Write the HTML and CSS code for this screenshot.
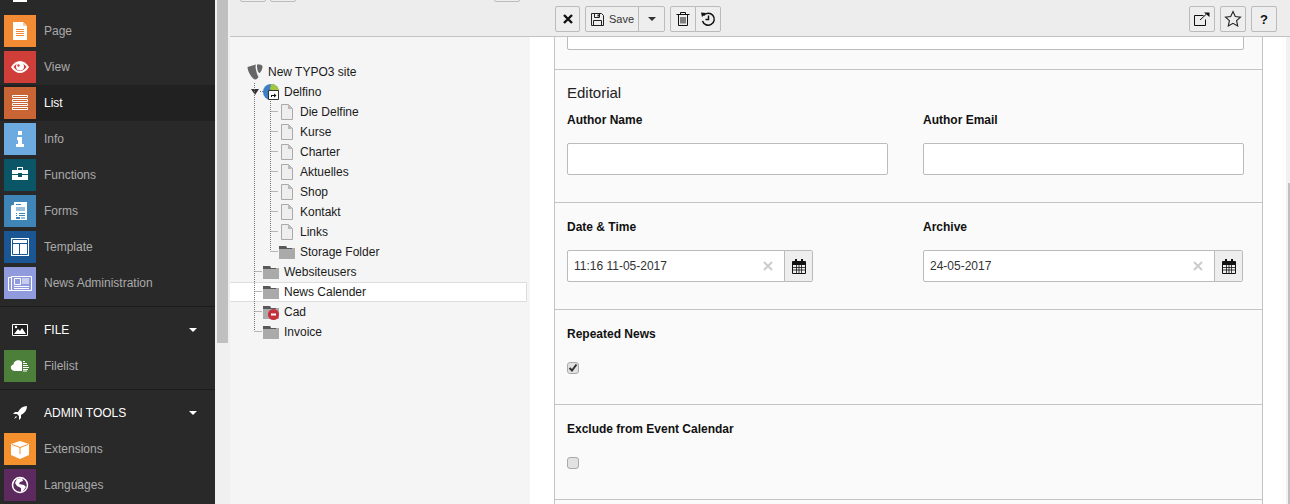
FILE: index.html
```html
<!DOCTYPE html>
<html lang="en">
<head>
  <meta charset="UTF-8">
  <title>TYPO3 Backend</title>
  <link rel="stylesheet" href="styles.css">
</head>
<body>

  <nav class="sidebar">
    <div class="menu">
      <div class="group">
        <div class="group-head">
          <span class="head-icon"><svg width="16" height="16" viewBox="0 0 16 16"><rect x="2" y="1" width="12" height="13" fill="none" stroke="#fff" stroke-width="2"/></svg></span>
        </div>
        <a class="item"><span class="tile t-page"><svg width="32" height="32" viewBox="0 0 32 32"><path d="M9 7h10l4 4v14H9z" fill="#fff"/><path d="M19 7l4 4h-4z" fill="#f7c9a0"/><path d="M12 14.500h8M12 16.500h8M12 18.500h8M12 20.500h8" stroke="#f38b34"/></svg></span>Page</a>
        <a class="item"><span class="tile t-view"><svg width="32" height="32" viewBox="0 0 32 32"><path d="M7 16c5-8 13-8 18 0-5 8-13 8-18 0z" fill="#fff"/><path d="M9.500 16c2-2.800 4-4 6.500-4s4.500 1.200 6.500 4c-2 2.800-4 4-6.500 4s-4.500-1.200-6.500-4z" fill="#d03e3a"/><circle cx="16" cy="15.500" r="4" fill="#fff"/><circle cx="14.500" cy="14.500" r="1.200" fill="#d03e3a"/></svg></span>View</a>
        <a class="item active"><span class="tile t-list"><svg width="32" height="32" viewBox="0 0 32 32"><path d="M8.500 8.500h15v2h-15zM8.500 12.500h15v2h-15zM8.500 16.500h15v2h-15zM8.500 20.500h15v2h-15z" fill="none" stroke="#fff"/></svg></span>List</a>
        <a class="item"><span class="tile t-info"><svg width="32" height="32" viewBox="0 0 32 32"><path d="M14 8h4v4h-4zM13 14h5v7h2v3h-8v-3h2v-4h-1z" fill="#fff"/></svg></span>Info</a>
        <a class="item"><span class="tile t-func"><svg width="32" height="32" viewBox="0 0 32 32"><path d="M13 11V8h6v3h5v4h-6v-1h-4v1H8v-4zM14 9v2h4V9zM8 16h6v2h4v-2h6v5H8z" fill="#fff" fill-rule="evenodd"/></svg></span>Functions</a>
        <a class="item"><span class="tile t-forms"><svg width="32" height="32" viewBox="0 0 32 32"><path d="M8 10h2v15H7V11zM10 7h13v18H10z" fill="#fff"/><path d="M12 12h9v4h-9z" fill="#9cc0dc"/><path d="M12 9.500h5M12 18.500h1M15 18.500h6M12 20.500h1M15 20.500h6" stroke="#3f85b8"/><path d="M12 22h4v2h-4z" fill="#3f85b8"/><path d="M17 22h4v2h-4z" fill="#9cc0dc"/></svg></span>Forms</a>
        <a class="item"><span class="tile t-temp"><svg width="32" height="32" viewBox="0 0 32 32"><path d="M7 7h18v18H7z" fill="#fff"/><path d="M8.500 8.500h15v15h-15zM8.500 12.500h15M15.500 12.500v11" fill="none" stroke="#1a5693"/></svg></span>Template</a>
        <a class="item"><span class="tile t-news"><svg width="32" height="32" viewBox="0 0 32 32"><path d="M4.500 10.500h3v13h-3zM7.500 9.500h20v14h-20z" fill="none" stroke="#fff"/><path d="M10.500 11.500h6v6h-6z" fill="none" stroke="#fff"/><path d="M18 12h7M18 14h7M18 16h7M10 19.500h15M10 21.500h15" stroke="#fff"/></svg></span>News Administration</a>
      </div>
      <div class="group">
        <div class="group-head">
          <span class="head-icon"><svg width="16" height="16" viewBox="0 0 16 16"><path d="M.5 2.500h15v11H.500z" fill="#1d1d1d" stroke="#fff"/><path d="M2 12l4-5 2 2 2-3 4 6z" fill="#fff"/><circle cx="4" cy="5" r="1.200" fill="#fff"/></svg></span>
          <span class="head-name">FILE</span>
          <span class="caret"></span>
        </div>
        <a class="item"><span class="tile t-file"><svg width="32" height="32" viewBox="0 0 32 32"><path d="M11 21c-5 0-5.500-6-1.500-6.500 0-4 6-6 8.500-2.500v9z" fill="#fff"/><path d="M19 11.500h2M19 13.500h4M19 15.500h5M19 17.500h6M19 19.500h5M19 21h4" stroke="#fff"/></svg></span>Filelist</a>
      </div>
      <div class="group">
        <div class="group-head">
          <span class="head-icon"><svg width="16" height="16" viewBox="0 0 16 16"><path d="M15 1c-4 0-7 2-9 6H3L1 9h4l2 2v4l2-2v-3c4-2 6-5 6-9z" fill="#fff"/><path d="M4 11l-2 3 3-2z" fill="#fff"/></svg></span>
          <span class="head-name">ADMIN TOOLS</span>
          <span class="caret"></span>
        </div>
        <a class="item"><span class="tile t-ext"><svg width="32" height="32" viewBox="0 0 32 32"><path d="M16 8l9 3v11l-9 4-9-4V11z" fill="#fff"/><path d="M8 11.500l8 3 8-3M16 14.500V21" fill="none" stroke="#f5902f"/></svg></span>Extensions</a>
        <a class="item"><span class="tile t-lang"><svg width="32" height="32" viewBox="0 0 32 32"><circle cx="16" cy="16" r="7.500" fill="none" stroke="#fff" stroke-width="1.500"/><path d="M13 10l5-1 1 3-3 1-1 2 5 1 2 2-3 4-2 1v-4l-4-2-2-3z" fill="#fff"/></svg></span>Languages</a>
      </div>
    </div>
  </nav>

  <div class="gutter"><div class="gutter-thumb"></div></div>

  <div class="workspace">
    <header class="topbar">
      <div class="tree-tools">
        <button class="btn btn-clip"></button>
        <button class="btn btn-clip"></button>
        <button class="btn btn-clip btn-last"></button>
      </div>
      <div class="actions">
        <button class="btn btn-close"><svg width="12" height="12" viewBox="0 0 12 12"><path d="M2 2l8 8M10 2l-8 8" stroke="#111" stroke-width="2.400"/></svg></button>
        <div class="btn-group">
          <button class="btn btn-save"><svg width="15" height="15" viewBox="0 0 15 15"><path d="M1.500 1.500h10l2 2v10h-12z" fill="none" stroke="#222"/><path d="M4.500 1.500v4h5v-4M3.500 13.500v-5h8v5" fill="none" stroke="#222"/><path d="M7.500 2.500h1.500v2H7.500z" fill="#222"/></svg>Save</button>
          <button class="btn btn-more"><span class="caret dark"></span></button>
        </div>
        <div class="btn-group">
          <button class="btn"><svg width="14" height="16" viewBox="0 0 14 16"><path d="M.5 3.500h13M4.500 3V1.500h5V3M2.500 3.500v11h9v-11M5 6v6.500M7 6v6.500M9 6v6.500" fill="none" stroke="#111"/></svg></button>
          <button class="btn"><svg width="16" height="16" viewBox="0 0 16 16"><path d="M3.500 4.500A6 6 0 1 1 2.500 10" fill="none" stroke="#111" stroke-width="1.500"/><path d="M1 1.500l5 .5-4 4z" fill="#111"/><path d="M8.500 4.500v4h-3" fill="none" stroke="#111" stroke-width="1.500"/></svg></button>
        </div>
        <div class="actions-right">
          <button class="btn"><svg width="16" height="14" viewBox="0 0 16 14"><path d="M9.500 3.500h-9v10h11v-6" fill="none" stroke="#111"/><path d="M6 8l6-5.500" stroke="#111"/><path d="M10 .5h5.500V5z" fill="#111"/></svg></button>
          <button class="btn"><svg width="18" height="18" viewBox="0 0 18 18"><path d="M9 1.500l2.300 5 5.200.6-3.900 3.600 1.100 5.300L9 13.300 4.300 16l1.100-5.300L1.500 7.100l5.200-.6z" fill="none" stroke="#222" stroke-width="1.100"/></svg></button>
          <button class="btn btn-help">?</button>
        </div>
      </div>
    </header>

    <div class="panes">
      <aside class="tree">
        <svg class="tree-lines" width="300" height="320" viewBox="0 0 300 320">
          <path d="M24.500 46v248M24.500 234.500h8M24.500 254.500h8M24.500 274.500h8M24.500 294.500h8M30 54.500h3M40.500 64v150M40.500 74.500h8M40.500 94.500h8M40.500 114.500h8M40.500 134.500h8M40.500 154.500h8M40.500 174.500h8M40.500 194.500h8M40.500 214.500h8" fill="none" stroke="#777" stroke-dasharray="1 1"/>
        </svg>
        <div class="node root">
          <svg class="node-icon" width="16" height="16" viewBox="0 0 16 16"><path d="M.5 3L9 .5C8.500 1.500 8.500 3 8.700 4.500 9.300 8 10.500 11.500 11.500 13 10.500 14.500 9.500 15.500 8.500 15.500 5 15.500.5 7 .5 3z" fill="#666"/><path d="M10.500.3C13 .3 15.500 1 15.500 2.500 15.500 5 13.500 9 12.500 9 11 9 10 5 10 2 10 1 10.200.5 10.500.3z" fill="#666"/></svg>
          New TYPO3 site
        </div>
        <div class="node level1">
          <span class="toggle"></span>
          <svg class="node-icon" width="16" height="16" viewBox="0 0 16 16"><circle cx="8" cy="8" r="8" fill="#3c7fc4"/><path d="M8 0a8 8 0 0 1 8 8l-5 1-4-4z" fill="#a5c63b"/><path d="M5.500 6.500h10v9h-10z" fill="#fff" stroke="#333"/><path d="M8 13v-2h3V9.500l2.500 2-2.500 2V12H9v1z" fill="#111"/></svg>
          Delfino
        </div>
        <div class="node level2"><svg class="node-icon" width="16" height="16" viewBox="0 0 16 16"><path d="M2.500 .5h7l4 4v11h-11z" fill="#eee" stroke="#aaa"/><path d="M9 .5l4.500 4.500H9z" fill="#bbb"/></svg>Die Delfine</div>
        <div class="node level2"><svg class="node-icon" width="16" height="16" viewBox="0 0 16 16"><path d="M2.500 .5h7l4 4v11h-11z" fill="#eee" stroke="#aaa"/><path d="M9 .5l4.500 4.500H9z" fill="#bbb"/></svg>Kurse</div>
        <div class="node level2"><svg class="node-icon" width="16" height="16" viewBox="0 0 16 16"><path d="M2.500 .5h7l4 4v11h-11z" fill="#eee" stroke="#aaa"/><path d="M9 .5l4.500 4.500H9z" fill="#bbb"/></svg>Charter</div>
        <div class="node level2"><svg class="node-icon" width="16" height="16" viewBox="0 0 16 16"><path d="M2.500 .5h7l4 4v11h-11z" fill="#eee" stroke="#aaa"/><path d="M9 .5l4.500 4.500H9z" fill="#bbb"/></svg>Aktuelles</div>
        <div class="node level2"><svg class="node-icon" width="16" height="16" viewBox="0 0 16 16"><path d="M2.500 .5h7l4 4v11h-11z" fill="#eee" stroke="#aaa"/><path d="M9 .5l4.500 4.500H9z" fill="#bbb"/></svg>Shop</div>
        <div class="node level2"><svg class="node-icon" width="16" height="16" viewBox="0 0 16 16"><path d="M2.500 .5h7l4 4v11h-11z" fill="#eee" stroke="#aaa"/><path d="M9 .5l4.500 4.500H9z" fill="#bbb"/></svg>Kontakt</div>
        <div class="node level2"><svg class="node-icon" width="16" height="16" viewBox="0 0 16 16"><path d="M2.500 .5h7l4 4v11h-11z" fill="#eee" stroke="#aaa"/><path d="M9 .5l4.500 4.500H9z" fill="#bbb"/></svg>Links</div>
        <div class="node level2"><svg class="node-icon" width="16" height="16" viewBox="0 0 16 16"><path d="M0 2h7l1 2h8v11H0z" fill="#aaa"/><path d="M0 2h7l1 2h5v1H0z" fill="#595959"/></svg>Storage Folder</div>
        <div class="node level1"><svg class="node-icon" width="16" height="16" viewBox="0 0 16 16"><path d="M0 2h7l1 2h8v11H0z" fill="#aaa"/><path d="M0 2h7l1 2h5v1H0z" fill="#595959"/></svg>Websiteusers</div>
        <div class="node level1 selected"><svg class="node-icon" width="16" height="16" viewBox="0 0 16 16"><path d="M0 2h7l1 2h8v11H0z" fill="#aaa"/><path d="M0 2h7l1 2h5v1H0z" fill="#595959"/></svg>News Calender</div>
        <div class="node level1"><svg class="node-icon" width="16" height="16" viewBox="0 0 16 16"><path d="M0 2h7l1 2h8v11H0z" fill="#aaa"/><path d="M0 2h7l1 2h5v1H0z" fill="#595959"/><circle cx="10.500" cy="10.500" r="5.500" fill="#c5303a"/><path d="M8 9.500h5v2H8z" fill="#fff"/></svg>Cad</div>
        <div class="node level1"><svg class="node-icon" width="16" height="16" viewBox="0 0 16 16"><path d="M0 2h7l1 2h8v11H0z" fill="#aaa"/><path d="M0 2h7l1 2h5v1H0z" fill="#595959"/></svg>Invoice</div>
      </aside>

      <main class="content">
        <form class="panel">
          <section class="section section-cut">
            <input class="input input-full" type="text">
          </section>

          <section class="section section-editorial">
            <h3 class="section-title">Editorial</h3>
            <div class="fields">
              <div class="field">
                <label class="label">Author Name</label>
                <input class="input" type="text">
              </div>
              <div class="field">
                <label class="label">Author Email</label>
                <input class="input" type="text">
              </div>
            </div>
          </section>

          <section class="section">
            <div class="fields">
              <div class="field">
                <label class="label">Date &amp; Time</label>
                <div class="date date-short">
                  <span class="date-value">11:16 11-05-2017</span>
                  <span class="date-clear"><svg width="10" height="10" viewBox="0 0 10 10"><path d="M1 1l8 8M9 1l-8 8" stroke="#ccc" stroke-width="2"/></svg></span>
                  <span class="date-btn"><svg width="14" height="15" viewBox="0 0 14 15"><path d="M.5 2.500h13v12H.5z" fill="none" stroke="#111"/><path d="M1 3h12v3H1zM3 0h2v4H3zM9 0h2v4H9z" fill="#111"/><path d="M4.500 6v8M7 6v8M9.500 6v8M1 8.500h12M1 11h12" stroke="#111" stroke-width=".8"/></svg></span>
                </div>
              </div>
              <div class="field">
                <label class="label">Archive</label>
                <div class="date">
                  <span class="date-value">24-05-2017</span>
                  <span class="date-clear"><svg width="10" height="10" viewBox="0 0 10 10"><path d="M1 1l8 8M9 1l-8 8" stroke="#ccc" stroke-width="2"/></svg></span>
                  <span class="date-btn"><svg width="14" height="15" viewBox="0 0 14 15"><path d="M.5 2.500h13v12H.5z" fill="none" stroke="#111"/><path d="M1 3h12v3H1zM3 0h2v4H3zM9 0h2v4H9z" fill="#111"/><path d="M4.500 6v8M7 6v8M9.500 6v8M1 8.500h12M1 11h12" stroke="#111" stroke-width=".8"/></svg></span>
                </div>
              </div>
            </div>
          </section>

          <section class="section section-check">
            <label class="label">Repeated News</label>
            <input class="check" type="checkbox" checked>
          </section>

          <section class="section section-check">
            <label class="label">Exclude from Event Calendar</label>
            <input class="check" type="checkbox">
          </section>
        </form>
        <div class="scroll-track"><div class="scroll-thumb"></div></div>
      </main>
    </div>
  </div>

</body>
</html>
```

FILE: styles.css
```css
* {
  box-sizing: border-box;
}
html, body {
  margin: 0;
  height: 504px;
  overflow: hidden;
}
body {
  display: flex;
  font-family: "Liberation Sans", Arial, sans-serif;
  font-size: 12px;
  color: #1a1a1a;
  background: #fff;
}

/* module menu */
.sidebar {
  width: 215px;
  flex: none;
  background: #292929;
  overflow: hidden;
}
.menu {
  margin-top: -28px;
}
.group {
  padding-bottom: 5px;
  border-bottom: 1px solid #1c1c1c;
}
.group-head {
  display: flex;
  align-items: center;
  height: 41px;
  padding-top: 5px;
  color: #fff;
}
.head-icon {
  width: 44px;
  flex: none;
  display: flex;
  justify-content: center;
  padding-right: 4px;
}
.head-name {
  flex: 1;
}
.caret {
  width: 0;
  height: 0;
  margin-right: 18px;
  border-left: 4px solid transparent;
  border-right: 4px solid transparent;
  border-top: 4px solid #fff;
}
.caret.dark {
  margin: 0;
  border-top-color: #333;
}
.item {
  display: flex;
  align-items: center;
  gap: 8px;
  height: 36px;
  padding-left: 4px;
  color: #aaa;
}
.item.active {
  background: #212121;
  color: #fff;
}
.tile {
  width: 32px;
  height: 32px;
  flex: none;
  display: block;
}
.tile svg {
  display: block;
}
.t-page { background: #f38b34; }
.t-view { background: #d03e3a; }
.t-list { background: #c96534; }
.t-info { background: #6daae0; }
.t-func { background: #0a5566; }
.t-forms { background: #3f85b8; }
.t-temp { background: #1a5693; }
.t-news { background: #8f9bdd; }
.t-file { background: #4b7f3a; }
.t-ext { background: #f5902f; }
.t-lang { background: #5c2a5f; }

/* scrollbar between menu and tree */
.gutter {
  width: 15px;
  flex: none;
  padding: 0 2px;
  background: #f0f0f0;
}
.gutter-thumb {
  width: 11px;
  height: 343px;
  background: #c0c0c0;
}

.workspace {
  flex: 1;
  min-width: 0;
  display: flex;
  flex-direction: column;
}

/* doc header */
.topbar {
  display: flex;
  height: 37px;
  flex: none;
  background: #ededed;
  border-bottom: 1px solid #c3c3c3;
  overflow: hidden;
}
.tree-tools {
  width: 325px;
  flex: none;
  display: flex;
  gap: 4px;
  padding-left: 10px;
}
.btn-clip {
  width: 26px;
  margin-top: -24px;
}
.btn-last {
  margin-left: 194px;
}
.actions {
  flex: 1;
  display: flex;
  gap: 5px;
  padding: 6px 13px 0 0;
}
.actions-right {
  display: flex;
  gap: 5px;
  margin-left: auto;
}
.btn {
  display: flex;
  align-items: center;
  justify-content: center;
  width: 26px;
  height: 26px;
  padding: 0;
  flex: none;
  font-family: inherit;
  font-size: 11px;
  color: #333;
  background: #eee;
  border: 1px solid #bbb;
  border-radius: 2px;
}
.btn-close {
  width: 25px;
}
.btn-group {
  display: flex;
}
.btn-group .btn:first-child {
  border-radius: 2px 0 0 2px;
}
.btn-group .btn:last-child {
  border-radius: 0 2px 2px 0;
  margin-left: -1px;
}
.btn-save {
  width: 54px;
  gap: 4px;
}
.btn-more {
  width: 27px;
}
.btn-help {
  font-size: 13px;
  font-weight: bold;
  color: #111;
}

.panes {
  flex: 1;
  display: flex;
  min-height: 0;
}

/* page tree */
.tree {
  position: relative;
  width: 300px;
  flex: none;
  padding: 25px 3px 0 0;
  background: #f5f5f5;
}
.tree-lines {
  position: absolute;
  left: 0;
  top: 0;
  z-index: 1;
  pointer-events: none;
}
.node {
  position: relative;
  display: flex;
  align-items: center;
  gap: 5px;
  height: 20px;
  line-height: 20px;
  color: #1a1a1a;
}
.node-icon {
  flex: none;
}
.root {
  padding-left: 17px;
}
.level1 {
  padding-left: 33px;
}
.level2 {
  padding-left: 49px;
}
.selected {
  background: #fff;
  border: 1px solid #ddd;
  border-left: 0;
}
.toggle {
  position: absolute;
  left: 21px;
  top: 7px;
  border-left: 4px solid transparent;
  border-right: 4px solid transparent;
  border-top: 6px solid #333;
}

/* edit form */
.content {
  position: relative;
  flex: 1;
  min-width: 0;
  padding-left: 24px;
  overflow: hidden;
  background: #fff;
}
.panel {
  width: 709px;
  min-height: 100%;
  background: #fafafa;
  border-left: 1px solid #c3c3c3;
  border-right: 1px solid #c3c3c3;
}
.section {
  padding: 15px 18px 27px 12px;
  border-bottom: 1px solid #c3c3c3;
}
.section-cut {
  height: 33px;
  padding-top: 0;
  padding-bottom: 0;
  overflow: hidden;
}
.input-full {
  display: block;
  margin-top: -19px;
}
.section-editorial {
  padding-top: 14px;
}
.section-title {
  margin: 0 0 10px;
  font-size: 15px;
  line-height: 17px;
  font-weight: normal;
  color: #222;
}
.fields {
  display: grid;
  grid-template-columns: 321px 321px;
  column-gap: 35px;
}
.label {
  display: block;
  line-height: 18px;
  margin-bottom: 14px;
  font-weight: bold;
  color: #111;
}
.input {
  width: 100%;
  height: 32px;
  padding: 0 6px;
  background: #fff;
  border: 1px solid #bbb;
  border-radius: 2px;
}
.date {
  display: flex;
  align-items: center;
  width: 320px;
  height: 32px;
  background: #fff;
  border: 1px solid #bbb;
  border-radius: 2px;
}
.date-short {
  width: 246px;
}
.date-value {
  flex: 1;
  padding-left: 6px;
  color: #333;
}
.date-clear {
  display: flex;
  margin-right: 11px;
}
.date-btn {
  display: flex;
  align-items: center;
  justify-content: center;
  width: 28px;
  height: 30px;
  background: #eee;
  border-left: 1px solid #bbb;
}
.section-check {
  height: 95px;
  padding-bottom: 0;
}
.section-check .label {
  margin-bottom: 19px;
}
.check {
  appearance: none;
  display: block;
  width: 12px;
  height: 12px;
  margin: 0;
  background: #e2e2e2;
  border: 1px solid #aaa;
  border-radius: 3px;
}
.check:checked {
  background: #e2e2e2 url("data:image/svg+xml,%3Csvg xmlns='http://www.w3.org/2000/svg' width='10' height='10'%3E%3Cpath d='M1.500 5l2.500 2.500 4.500-6' fill='none' stroke='%23333' stroke-width='2'/%3E%3C/svg%3E") center no-repeat;
}
.scroll-track {
  position: absolute;
  right: 0;
  top: 0;
  bottom: 0;
  width: 4px;
  padding-left: 2px;
  padding-top: 146px;
  background: #f1f1f1;
}
.scroll-thumb {
  height: 100%;
  background: #c0c0c0;
}
```
